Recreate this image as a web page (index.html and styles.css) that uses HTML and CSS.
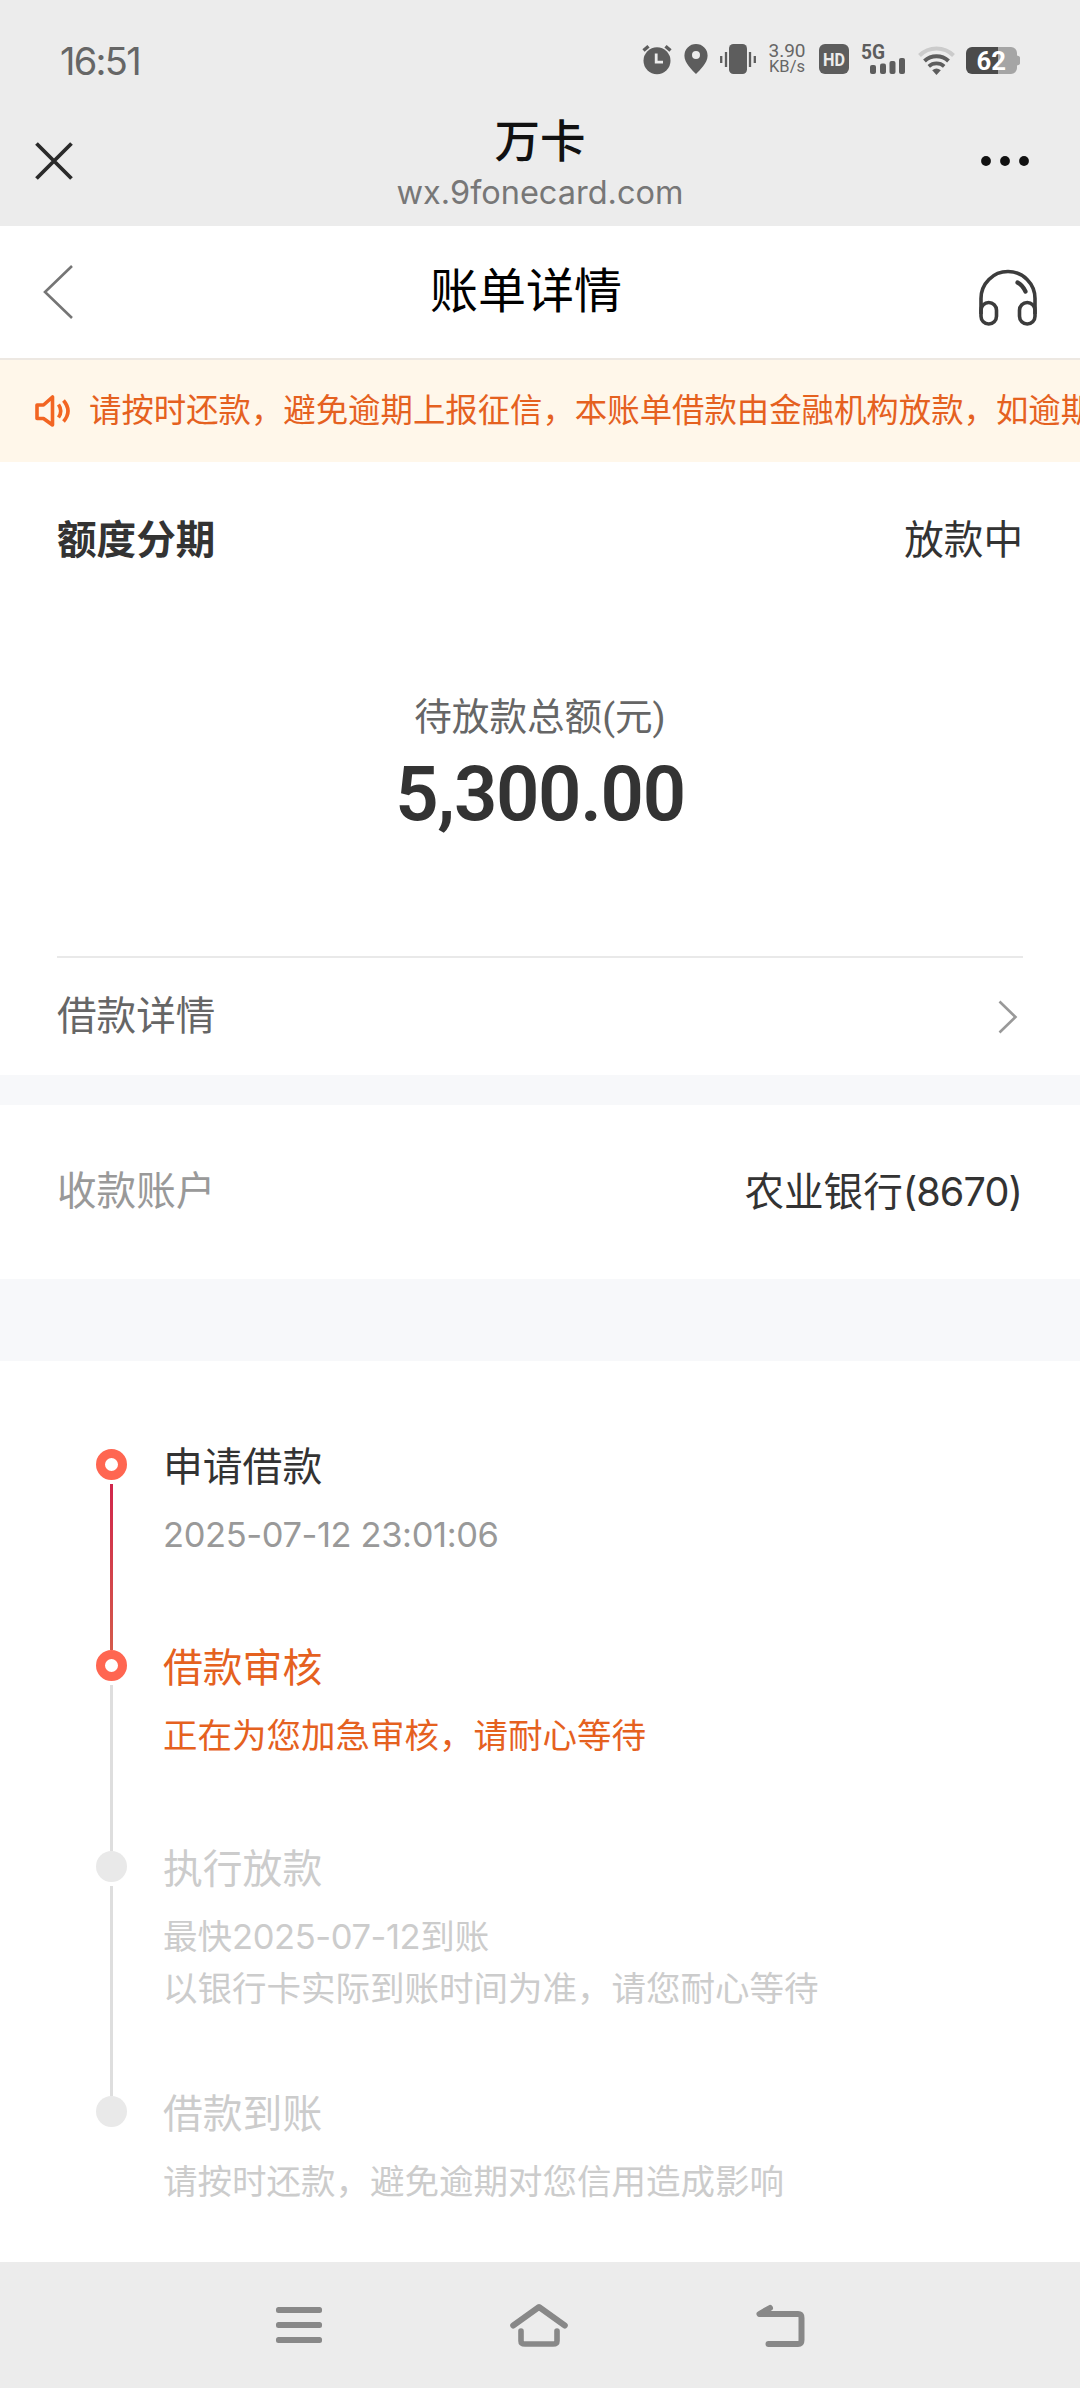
FILE: index.html
```html
<!DOCTYPE html>
<html lang="zh-CN">
<head>
<meta charset="utf-8">
<title>账单详情</title>
<link rel="stylesheet" href="styles.css">
</head>
<body>
<header class="browser">
  <div class="status">
    <span class="clock">16:51</span>
    <div class="status-icons">
      <svg class="i-alarm" width="30" height="30" viewBox="0 0 30 30"><circle cx="15" cy="16.7" r="13.5" fill="#5d5d5d"/><path d="M1.5 6.5 6.5 2.2M28.500 6.500 23.500 2.200" stroke="#5d5d5d" stroke-width="3.400" fill="none"/><path d="M14.200 9.500v8.700h6.800" stroke="#ececec" stroke-width="2.800" fill="none"/></svg>
      <svg class="i-pin" width="24" height="30" viewBox="0 0 24 30"><path fill="#5d5d5d" fill-rule="evenodd" d="M12 0a11.600 11.600 0 0 1 11.600 11.800C23.600 19 15.500 26.500 12 30 8.500 26.500.4 19 .4 11.800A11.600 11.600 0 0 1 12 0Zm0 7a4 4 0 1 0 0 8 4 4 0 0 0 0-8Z"/></svg>
      <svg class="i-vib" width="36" height="30" viewBox="0 0 36 30"><rect x="9" y="0" width="18" height="30" rx="4.500" fill="#5d5d5d"/><path d="M6 8v15M30 8v15M1.200 12v7M34.800 12v7" stroke="#5d5d5d" stroke-width="2.300"/></svg>
      <div class="speed"><span>3.90</span><span class="unit">KB/s</span></div>
      <svg class="i-hd" width="30" height="30" viewBox="0 0 30 30"><rect width="30" height="30" rx="6" fill="#5d5d5d"/><text x="4" y="21.500" class="hd-text" textLength="22" lengthAdjust="spacingAndGlyphs">HD</text></svg>
      <svg class="i-signal" width="45" height="30" viewBox="0 0 45 30"><text x="0" y="14.500" class="net-text" textLength="24" lengthAdjust="spacingAndGlyphs">5G</text><g fill="#5d5d5d"><rect x="9" y="21" width="6" height="9" rx="2"/><rect x="19" y="19.500" width="6" height="10.500" rx="2"/><rect x="28.500" y="17" width="6" height="13" rx="2"/><rect x="38" y="14" width="6" height="16" rx="2"/></g></svg>
      <svg class="i-wifi" width="37" height="29" viewBox="0 0 37 29"><g fill="none" stroke="#5d5d5d" stroke-width="4"><path d="M1.500 9.500a24 24 0 0 1 34 0" stroke="#cbcbcb"/><path d="M6.500 15a17.500 17.500 0 0 1 24 0"/><path d="M10.800 20.300a11.500 11.500 0 0 1 15.400 0" stroke-width="3.600"/></g><path d="M14.200 24.300a6.800 6.800 0 0 1 8.600 0L18.500 29Z" fill="#5d5d5d"/></svg>
      <svg class="i-battery" width="54" height="27" viewBox="0 0 54 27"><path d="M6 0h39a6 6 0 0 1 6 6v2.500q3 .5 3 2v6q0 1.500-3 2V21a6 6 0 0 1-6 6H6Z" fill="#a5a5a5"/><path d="M32 0H6a6 6 0 0 0-6 6v15a6 6 0 0 0 6 6h26Z" fill="#4b4b4b"/><text x="10.500" y="22.500" class="bat-text" textLength="29.500" lengthAdjust="spacingAndGlyphs">62</text></svg>
    </div>
  </div>
  <div class="bar">
    <svg class="close" width="38" height="38" viewBox="0 0 38 38"><path d="M1.500 1.500l35 35M36.500 1.500l-35 35" stroke="#2a2a2a" stroke-width="3.800"/></svg>
    <div class="site">
      <div class="site-name">万卡</div>
      <div class="site-url">wx.9fonecard.com</div>
    </div>
    <svg class="more" width="48" height="10" viewBox="0 0 48 10" fill="#111"><circle cx="5" cy="5" r="4.900"/><circle cx="24" cy="5" r="4.900"/><circle cx="43" cy="5" r="4.900"/></svg>
  </div>
</header>

<nav class="page-nav">
  <svg class="back" width="30" height="54" viewBox="0 0 30 54"><path d="M29 1 2 27l27 26" fill="none" stroke="#757575" stroke-width="2.600"/></svg>
  <h1>账单详情</h1>
  <svg class="service" width="58" height="57" viewBox="0 0 58 57" fill="none" stroke="#3c3c3c" stroke-width="3.600"><path d="M2 45V29.500a27 27 0 0 1 54 0V45"/><rect x="2" y="33.500" width="15.500" height="21.500" rx="7.750"/><rect x="40.500" y="33.500" width="15.500" height="21.500" rx="7.750"/><path d="M38.500 13.500q5 2.500 8 9" stroke-width="4.200" stroke-linecap="round"/></svg>
</nav>

<div class="notice">
  <svg width="36" height="34" viewBox="0 0 36 34" fill="none" stroke="#f26522" stroke-width="3.600"><path d="M2 11h6.500L17.500 3v28L8.500 24.500H2Z" stroke-linejoin="round"/><path d="M23.500 10.500q4.500 6.500 0 13M28.500 6.500q9 10.500 0 21"/></svg>
  <span>请按时还款，避免逾期上报征信，本账单借款由金融机构放款，如逾期</span>
</div>

<main>
  <section class="summary">
    <div class="row head"><strong>额度分期</strong><span>放款中</span></div>
    <div class="total">
      <div class="total-label">待放款总额(元)</div>
      <div class="total-value">5,300.00</div>
    </div>
    <div class="row detail"><span>借款详情</span><svg width="20" height="34" viewBox="0 0 20 34"><path d="M1.500 1.500 17.500 17l-16 15.500" fill="none" stroke="#999" stroke-width="2.600"/></svg></div>
  </section>

  <section class="row account"><span class="muted">收款账户</span><span>农业银行<span class="digits">(8670)</span></span></section>

  <ol class="timeline">
    <li class="step done"><div class="rail"><i class="dot"></i><i class="line"></i></div>
      <div class="text"><h2>申请借款</h2><p class="date">2025-07-12 23:01:06</p></div></li>
    <li class="step current"><div class="rail"><i class="dot"></i><i class="line"></i></div>
      <div class="text"><h2>借款审核</h2><p>正在为您加急审核，请耐心等待</p></div></li>
    <li class="step tall"><div class="rail"><i class="dot"></i><i class="line"></i></div>
      <div class="text"><h2>执行放款</h2><p>最快<span class="date">2025-07-12</span>到账</p><p>以银行卡实际到账时间为准，请您耐心等待</p></div></li>
    <li class="step last"><div class="rail"><i class="dot"></i></div>
      <div class="text"><h2>借款到账</h2><p>请按时还款，避免逾期对您信用造成影响</p></div></li>
  </ol>
</main>

<footer class="system-nav">
  <svg width="46" height="36" viewBox="0 0 46 36" fill="#888"><rect width="46" height="6" rx="2.500"/><rect y="15" width="46" height="6" rx="2.500"/><rect y="30" width="46" height="6" rx="2.500"/></svg>
  <svg width="58" height="44" viewBox="0 0 58 44" fill="none" stroke="#888" stroke-width="6" stroke-linecap="round" stroke-linejoin="round"><path d="M3.200 22.500 29 4l25.800 18.500"/><path d="M11 28v10q0 3 4 3h28q4 0 4-3V28" stroke-width="5.600"/></svg>
  <svg width="49" height="43" viewBox="0 0 49 43" fill="none" stroke="#888" stroke-width="6" stroke-linecap="round" stroke-linejoin="round"><path d="M14 4 3.500 10H42q3.500 0 3.500 4v22q0 4-3.500 4H12.500"/></svg>
</footer>
</body>
</html>
```

FILE: styles.css
```css
* { box-sizing: border-box; }
html, body, h1, h2, p, ol { margin: 0; padding: 0; }
body {
  width: 1080px;
  height: 2388px;
  overflow: hidden;
  display: flex;
  flex-direction: column;
  background: #fff;
  color: #333;
  font-family: Roboto, "Noto Sans CJK SC", sans-serif;
  font-size: 39.6px;
}
svg { display: block; flex: none; overflow: visible; }

/* browser chrome */
.browser { height: 226px; flex: none; background: #ececec; }
.status {
  height: 118px;
  padding: 0 60px 0 60px;
  display: flex;
  align-items: center;
  justify-content: space-between;
}
.clock { font-family: Inter, sans-serif; font-size: 38px; line-height: 44px; color: #666; letter-spacing: -1.7px; margin-top: 4px; }
.status-icons { display: flex; align-items: center; }
.i-pin { margin-left: 12px; }
.i-vib { margin-left: 12px; }
.speed {
  width: 38px;
  margin-left: 12px;
  display: flex;
  flex-direction: column;
  align-items: center;
  font-size: 19px;
  line-height: 16px;
  color: #666;
}
.speed .unit { font-size: 16.500px; }
.i-hd { margin-left: 13px; }
.i-signal { margin-left: 12px; }
.i-wifi { margin-left: 12px; margin-top: 3px; }
.i-battery { margin-left: 11px; margin-top: 3px; }
.hd-text { font: 700 18px Roboto, sans-serif; fill: #ececec; }
.net-text { font: 700 20px Roboto, sans-serif; fill: #5d5d5d; }
.bat-text { font: 700 25px Roboto, sans-serif; fill: #fff; }

.bar {
  height: 108px;
  padding: 0 51px 0 35px;
  display: grid;
  grid-template-columns: 200px 1fr 184px;
  align-items: start;
}
.close { margin-top: 24px; }
.more { margin-top: 38px; justify-self: end; }
.site { text-align: center; }
.site-name { font-size: 45.500px; line-height: 50px; font-weight: 500; color: #111; }
.site-url { font-family: Inter, sans-serif; font-size: 32.500px; line-height: 40px; margin-top: 5px; color: #777; }

.page-nav {
  height: 134px;
  flex: none;
  padding: 0 43px 0 43px;
  display: flex;
  align-items: center;
  justify-content: space-between;
  border-bottom: 2px solid #ede8e2;
}
.page-nav h1 { font-size: 48px; line-height: 56px; font-weight: 400; color: #000; }
.service { margin-top: 10px; }

.notice {
  height: 102px;
  flex: none;
  padding-left: 35px;
  display: flex;
  align-items: center;
  gap: 18px;
  overflow: hidden;
  background: #fff7ea;
  color: #e5611f;
  font-size: 32.400px;
  line-height: 40px;
  white-space: nowrap;
}

main { flex: 1; min-height: 0; display: flex; flex-direction: column; background: #fff; }
.row { display: flex; align-items: center; justify-content: space-between; }
.summary { height: 613px; flex: none; padding: 0 57px; display: flex; flex-direction: column; }
.head { height: 156px; padding-top: 1px; line-height: 48px; }
.head strong { font-weight: 700; }
.total { flex: 1; padding-top: 75px; text-align: center; }
.total-label { font-size: 37.600px; line-height: 48px; color: #666; }
.total-value { font-size: 76px; line-height: 84px; font-weight: 600; margin-top: 11px; letter-spacing: -1.3px; color: #333; }
.detail { height: 119px; border-top: 2px solid #e9e9e9; color: #666; line-height: 48px; }
.detail svg { margin-right: 5px; }
.account { height: 204px; flex: none; padding: 0 58px 0 57px; border-top: 30px solid #f7f8fa; line-height: 48px; }
.muted { color: #999; }
.digits { font-family: Inter, sans-serif; letter-spacing: -0.9px; }

/* progress steps */
.timeline {
  flex: 1;
  min-height: 0;
  border-top: 82px solid #f7f8fa;
  padding: 88px 96px 0;
  list-style: none;
}
.step { display: flex; gap: 36px; height: 201px; color: #ccc; }
.step.tall { height: 245px; }
.step.last { height: auto; }
.rail { width: 31px; display: flex; flex-direction: column; align-items: center; }
.dot { width: 31px; height: 31px; border-radius: 50%; background: #e9e9e9; flex: none; }
.line { width: 3px; flex: 1; margin-top: 4px; background: #dedede; }
.done .dot, .current .dot { background: #fff; border: 9px solid #ff6651; }
.done .line { background: linear-gradient(#d1264b, #d45a4b); }
.text h2 { font-size: 39.800px; font-weight: 400; line-height: 48px; margin: -5px 0 17px; }
.text p { font-size: 34.500px; line-height: 52px; white-space: nowrap; }
.text .date { font-family: Inter, sans-serif; letter-spacing: -0.4px; }
.done h2 { color: #333; }
.done p { color: #999; }
.current { color: #e5611f; }

.system-nav {
  height: 126px;
  flex: none;
  background: #ececec;
  display: flex;
  justify-content: center;
  align-items: center;
  gap: 188px;
}
```
